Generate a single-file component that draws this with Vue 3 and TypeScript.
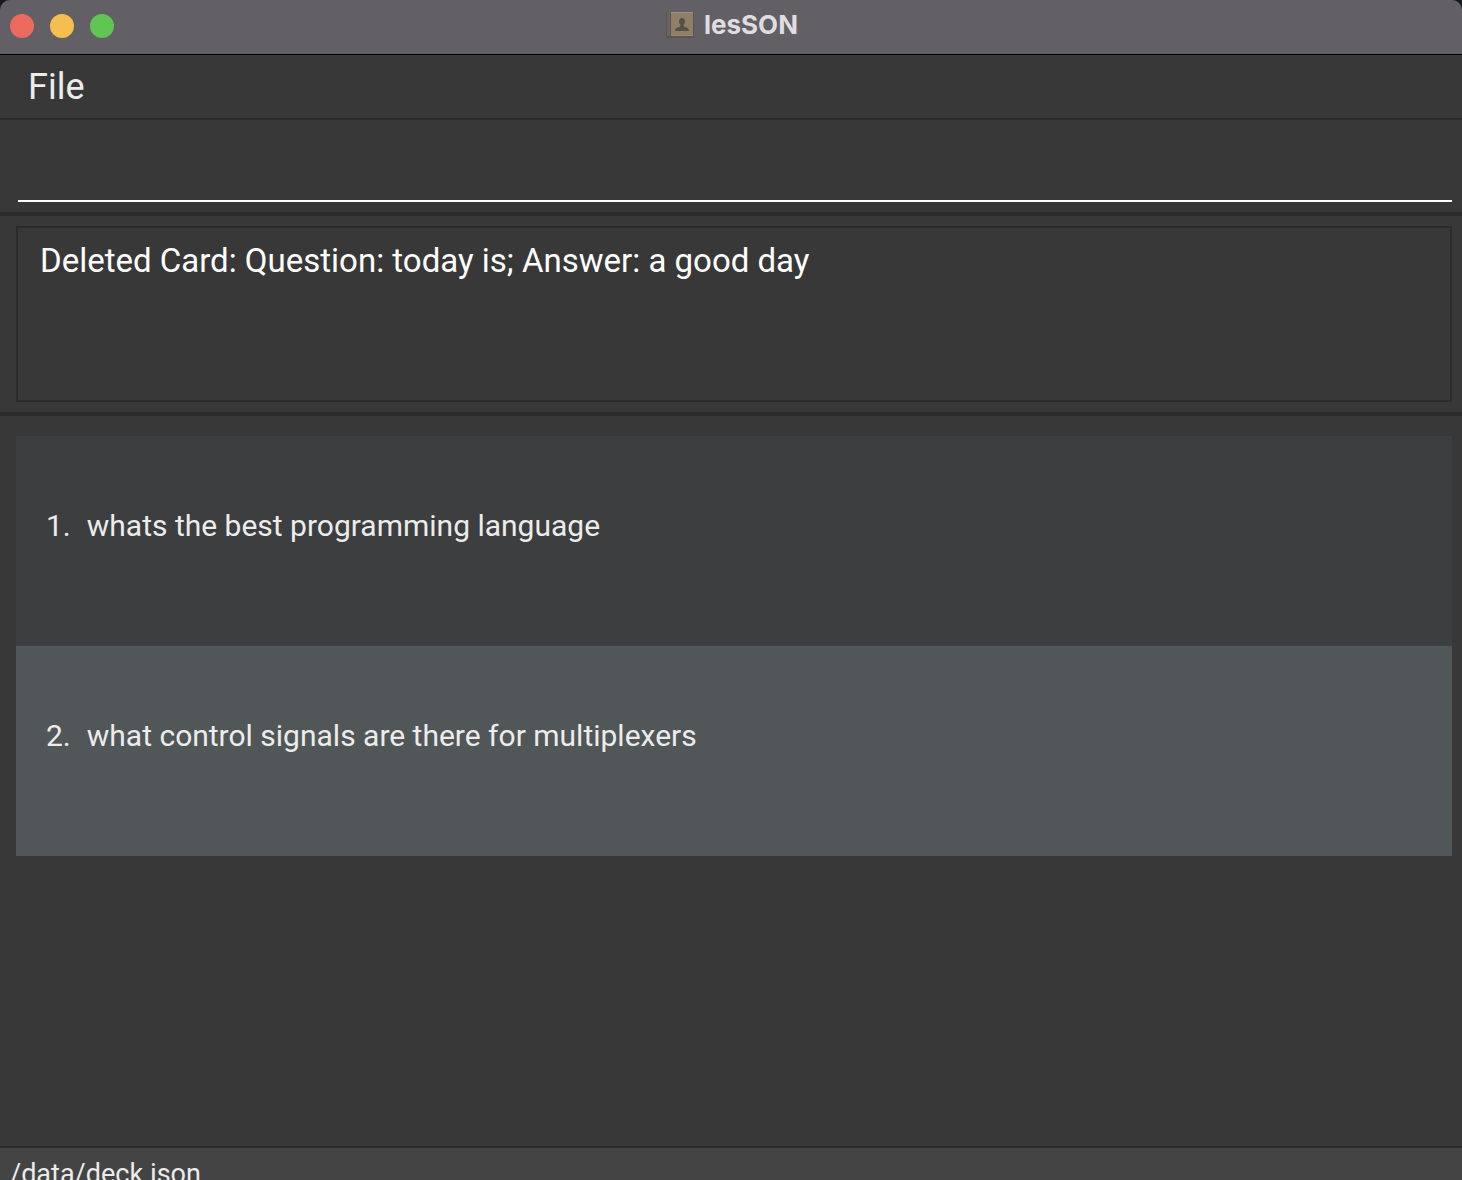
<script setup lang="ts">
import { ref } from 'vue'

interface Card {
  id: number
  question: string
}

const command = ref('')
const result = ref('Deleted Card: Question: today is; Answer: a good day')
const cards = ref<Card[]>([
  { id: 1, question: 'whats the best programming language' },
  { id: 2, question: 'what control signals are there for multiplexers' },
])
</script>

<template>
  <div class="window">
    <header class="titlebar">
      <div class="controls">
        <button class="control close" type="button" aria-label="Close"></button>
        <button class="control minimize" type="button" aria-label="Minimize"></button>
        <button class="control zoom" type="button" aria-label="Zoom"></button>
      </div>
      <h1 class="title">
        <svg class="book" viewBox="0 0 28 28" aria-hidden="true">
          <rect x="0" y="1" width="28" height="26" rx="1" fill="#5a5452" />
          <rect x="1" y="1" width="3" height="24" fill="#6b6360" />
          <rect x="5" y="1" width="22" height="24" fill="#8f7f69" />
          <rect x="5" y="1" width="22" height="1" fill="#a09383" />
          <rect x="5" y="24" width="22" height="1" fill="#a08b67" />
          <path
            d="M16 7c2 0 3 1.400 3 3.200 0 1.500-.6 2.600-1.300 3.400v1.400c.3 1.200 5.300 1.300 5.300 5H9c0-3.700 5-3.800 5.300-5v-1.400c-.7-.8-1.300-1.900-1.300-3.400C13 8.400 14 7 16 7z"
            fill="#564f4a"
          />
        </svg>
        <span>lesSON</span>
      </h1>
    </header>

    <nav class="menubar">
      <button class="menu" type="button">File</button>
    </nav>

    <form class="command" @submit.prevent>
      <input v-model="command" class="command-input" type="text" aria-label="Command" />
    </form>

    <section class="result">
      <textarea v-model="result" class="result-text" readonly aria-label="Result"></textarea>
    </section>

    <main class="deck">
      <ol class="cards">
        <li v-for="card in cards" :key="card.id" class="card">
          <span>{{ card.id }}.</span>
          <span>{{ card.question }}</span>
        </li>
      </ol>
    </main>

    <footer class="status">/data/deck.json</footer>
  </div>
</template>

<style>
body {
  margin: 0;
  background: #15191d;
}
</style>

<style scoped>
.window {
  display: flex;
  flex-direction: column;
  height: 100vh;
  overflow: hidden;
  border-radius: 10px 10px 0 0;
  background: #383838;
  color: #ececec;
  font-family: Roboto, 'Liberation Sans', sans-serif;
  font-size: 30px;
}

button,
input,
textarea {
  box-sizing: border-box;
  margin: 0;
  padding: 0;
  border: 0;
  border-radius: 0;
  outline: 0;
  background: transparent;
  color: inherit;
  font: inherit;
}

.titlebar {
  display: grid;
  grid-template-columns: 1fr auto 1fr;
  align-items: center;
  flex: none;
  height: 54px;
  border-bottom: 1px solid #000;
  background: #636065;
}

.controls {
  display: flex;
  gap: 16px;
  padding: 0 0 2px 10px;
}

.control {
  width: 24px;
  height: 24px;
  border-radius: 50%;
}

.close {
  background: #ed6a5e;
}

.minimize {
  background: #f5bf4f;
}

.zoom {
  background: #61c554;
}

.title {
  display: flex;
  align-items: center;
  gap: 10px;
  margin: 0;
  padding: 0 0 4px 2px;
  color: #dfdde1;
  font-family: Inter, 'Liberation Sans', sans-serif;
  font-size: 26px;
  font-weight: 700;
  line-height: 32px;
}

.book {
  width: 28px;
  height: 28px;
}

.menubar {
  flex: none;
  padding: 0 28px;
  border-bottom: 2px solid #2b2b2b;
}

.menu {
  display: block;
  height: 63px;
  font-size: 36px;
}

.command {
  flex: none;
  padding: 12px 10px 10px 18px;
  border-bottom: 4px solid #2b2b2b;
}

.command-input {
  display: block;
  width: 100%;
  height: 70px;
  border-bottom: 2px solid #fff;
}

.result {
  flex: none;
  padding: 10px 10px 10px 16px;
  border-bottom: 4px solid #2b2b2b;
}

.result-text {
  display: block;
  width: 100%;
  height: 176px;
  padding: 12px 22px;
  border: 2px solid #2b2b2b;
  color: #fff;
  font-size: 33px;
  line-height: 42px;
  resize: none;
}

.deck {
  flex: 1;
  min-height: 0;
  padding: 20px 10px 0 16px;
}

.cards {
  margin: 0;
  padding: 0;
  list-style: none;
}

.card {
  display: flex;
  gap: 16px;
  padding: 70px 30px 100px;
  background: #3c3e3f;
  line-height: 40px;
}

.card:nth-child(even) {
  background: #515658;
}

.status {
  flex: none;
  height: 26px;
  padding: 6px 10px 0;
  overflow: hidden;
  border-top: 2px solid #2b2b2b;
  background: #444;
  font-size: 27px;
  line-height: 40px;
}
</style>
